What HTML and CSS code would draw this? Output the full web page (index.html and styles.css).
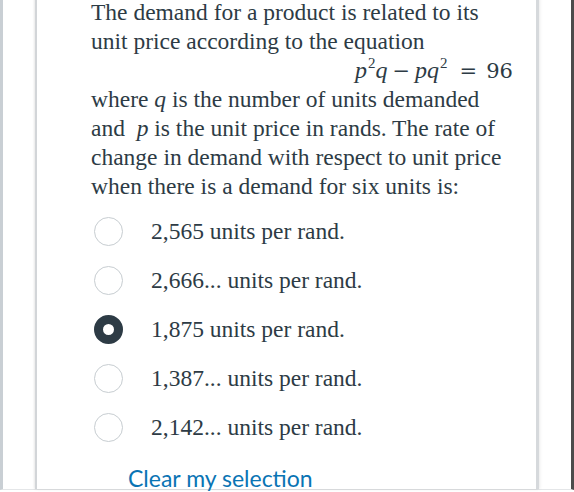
FILE: index.html
```html
<!DOCTYPE html>
<html>
<head>
<meta charset="utf-8">
<link rel="stylesheet" href="styles.css">
</head>
<body>
<div class="frame">
  <div class="card">
    <div class="question">
      <p>The demand for a product is related to its<br>unit price according to the equation</p>
      <div class="eq"><i>p</i><sup>2</sup><i>q</i><span class="op">−</span><i>p</i><i>q</i><sup>2</sup><span class="op eqs">=</span><span class="num">96</span></div>
      <p>where <i>q</i> is the number of units demanded<br>and &nbsp;<i>p</i> is the unit price in rands. The rate of<br>change in demand with respect to unit price<br>when there is a demand for six units is:</p>
    </div>
    <div class="options">
      <div class="option"><span class="radio"></span><span class="label">2,565 units per rand.</span></div>
      <div class="option"><span class="radio"></span><span class="label">2,666... units per rand.</span></div>
      <div class="option"><span class="radio checked"></span><span class="label">1,875 units per rand.</span></div>
      <div class="option"><span class="radio"></span><span class="label">1,387... units per rand.</span></div>
      <div class="option"><span class="radio"></span><span class="label">2,142... units per rand.</span></div>
    </div>
    <a class="clear" href="#">Clear my selection</a>
  </div>
</div>
</body>
</html>
```
FILE: styles.css
```css
html, body {
  margin: 0;
  padding: 0;
  background: #ffffff;
}
body {
  width: 574px;
  height: 492px;
  overflow: hidden;
}
.frame {
  box-sizing: border-box;
  width: 574px;
  height: 492px;
  border-left: 3px solid #c9cfd4;
  border-right: 3px solid #4c4c4c;
  border-bottom: 1px solid #e4e6e8;
  padding-left: 32px;
  padding-right: 32px;
}
.card {
  box-sizing: border-box;
  height: 100%;
  border-left: 2px solid #d2d5d8;
  border-right: 3px solid #d6d9dc;
  box-shadow: -1px 0 2px rgba(0,0,0,0.08), 1px 0 3px rgba(0,0,0,0.08);
  background: #fff;
  padding-left: 54px;
  padding-right: 0;
  color: #2d3b45;
  font-family: "Liberation Serif", "Times New Roman", serif;
  font-size: 23.5px;
  line-height: 29px;
}
.question {
  margin-top: -2px;
  white-space: nowrap;
}
.question p {
  margin: 0;
}
.eq {
  padding-left: 264px;
  height: 29px;
  white-space: nowrap;
  font-size: 24px;
}
.eq i {
  font-style: italic;
}
.eq sup {
  font-size: 15px;
  line-height: 0;
  vertical-align: 10px;
  margin-left: 1px;
}
.eq .op {
  font-family: "DejaVu Serif", serif;
  font-size: 21px;
  margin: 0 5px;
}
.eq .op.eqs {
  margin: 0 9px 0 12px;
}
.eq .num {
  font-family: "DejaVu Serif", serif;
  font-size: 21px;
}
.options {
  margin-top: 6px;
  margin-left: 3px;
}
.option {
  display: flex;
  align-items: center;
  height: 49px;
}
.radio {
  box-sizing: border-box;
  width: 29px;
  height: 29px;
  border-radius: 50%;
  border: 1.5px solid #c7cdd1;
  background: #fff;
  flex: none;
}
.radio.checked {
  border: 9.5px solid #2d3b45;
}
.label {
  margin-left: 28px;
}
.clear {
  display: block;
  margin-top: 11px;
  margin-left: 37px;
  font-family: Lato, "Open Sans", sans-serif;
  font-size: 23px;
  line-height: 30px;
  color: #0a74b4;
  text-decoration: none;
}
```
